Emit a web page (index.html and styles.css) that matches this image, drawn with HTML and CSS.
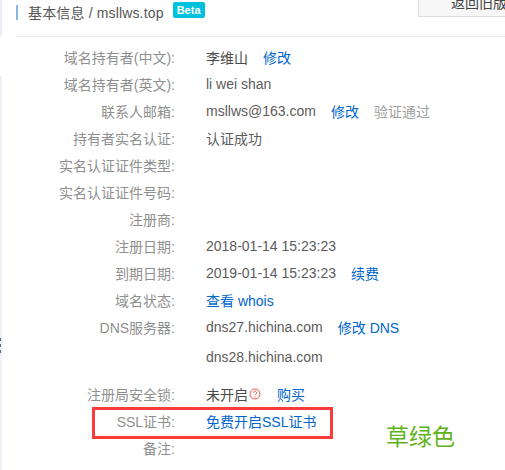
FILE: index.html
```html
<!DOCTYPE html>
<html lang="zh">
<head>
<meta charset="utf-8">
<title>基本信息</title>
<link rel="stylesheet" href="styles.css">
</head>
<body>
<div class="edge"></div>
<div class="grip"><i></i><i></i><i></i></div>
<main class="panel">
  <header class="head">
    <h1 class="title">基本信息 / msllws.top</h1>
    <span class="beta">Beta</span>
    <button class="old">返回旧版本</button>
  </header>
  <div class="rows">
    <div class="row"><span class="k">域名持有者(中文):</span><span class="v dark">李维山</span><a class="l">修改</a></div>
    <div class="row"><span class="k">域名持有者(英文):</span><span class="v">li wei shan</span></div>
    <div class="row"><span class="k">联系人邮箱:</span><span class="v">msllws@163.com</span><a class="l">修改</a><span class="muted">验证通过</span></div>
    <div class="row"><span class="k">持有者实名认证:</span><span class="v">认证成功</span></div>
    <div class="row"><span class="k">实名认证证件类型:</span></div>
    <div class="row"><span class="k">实名认证证件号码:</span></div>
    <div class="row"><span class="k">注册商:</span></div>
    <div class="row"><span class="k">注册日期:</span><span class="v">2018-01-14 15:23:23</span></div>
    <div class="row"><span class="k">到期日期:</span><span class="v">2019-01-14 15:23:23</span><a class="l">续费</a></div>
    <div class="row"><span class="k">域名状态:</span><a class="l first">查看 whois</a></div>
    <div class="row"><span class="k">DNS服务器:</span><span class="v">dns27.hichina.com</span><a class="l">修改 DNS</a></div>
    <div class="row second"><span class="k"></span><span class="v">dns28.hichina.com</span></div>
    <div class="row lock"><span class="k">注册局安全锁:</span><span class="v dark">未开启</span><svg class="q" viewBox="0 0 12 12" width="12" height="12"><circle cx="6" cy="6" r="5" fill="none" stroke="#f5574f" stroke-width="1"/><path d="M4.4 4.8a1.6 1.6 0 1 1 2.4 1.4c-.6.3-.8.6-.8 1.1" fill="none" stroke="#f5574f" stroke-width="1"/><circle cx="6" cy="9" r=".6" fill="#f5574f"/></svg><a class="l buy">购买</a></div>
    <div class="row"><span class="k">SSL证书:</span><a class="l first">免费开启SSL证书</a></div>
    <div class="row"><span class="k">备注:</span></div>
  </div>
</main>
<div class="mark"></div>
<div class="note">草绿色</div>
</body>
</html>
```
FILE: styles.css
```css
* { box-sizing: border-box; }
html, body { margin: 0; padding: 0; }
body {
  width: 505px;
  height: 470px;
  overflow: hidden;
  position: relative;
  background: #fff;
  font-family: "Liberation Sans", "Noto Sans CJK SC", sans-serif;
  font-size: 14px;
  color: #666;
}
.edge {
  position: absolute;
  left: 0;
  top: 0;
  bottom: 0;
  width: 2px;
  background: linear-gradient(#e9edf5 0 36px, #fff 36px 76px, #eef1f7 76px);
}
.grip {
  position: absolute;
  left: 0;
  top: 338px;
  display: flex;
  flex-direction: column;
  gap: 3px;
}
.grip i {
  display: block;
  width: 1px;
  height: 3px;
  background: #4d6b8a;
}
.panel { padding-left: 16px; }
.head {
  display: flex;
  align-items: flex-start;
  height: 37px;
  border-bottom: 1px solid #e8eaec;
  position: relative;
}
.title {
  margin: 5px 0 0;
  height: 15px;
  padding-left: 10px;
  border-left: 2px solid #88b7e0;
  font-size: 14px;
  font-weight: normal;
  line-height: 16px;
  letter-spacing: 0.15px;
  color: #555;
}
.beta {
  margin: 2px 0 0 9px;
  width: 32px;
  height: 16px;
  border-radius: 2px;
  background: #00c1de;
  color: #fff;
  font-size: 11px;
  font-weight: bold;
  line-height: 16px;
  text-align: center;
}
.old {
  position: absolute;
  left: 402px;
  top: -13px;
  width: 110px;
  height: 30px;
  border: 1px solid #ddd;
  background: #f7f7f7;
  color: #444;
  font: 14px "Liberation Sans", "Noto Sans CJK SC", sans-serif;
  padding: 0 0 0 32px;
  text-align: left;
  white-space: nowrap;
  overflow: hidden;
}
.rows { padding-top: 6px; }
.row {
  display: flex;
  align-items: center;
  height: 27px;
  white-space: nowrap;
}
.k {
  width: 159px;
  text-align: right;
  color: #8f8f8f;
}
.v { margin-left: 31px; color: #5c5c5c; }
.dark { color: #4a4a4a; }
.l { margin-left: 15px; color: #06c; }
.first { margin-left: 31px; }
.muted { margin-left: 15px; color: #a0a0a0; }
.second { height: 33px; }
.lock { margin-top: 7px; }
.q { margin-left: 1px; }
.buy { margin-left: 16px; }
.mark {
  position: absolute;
  left: 92px;
  top: 407px;
  width: 241px;
  height: 32px;
  border: 3px solid #fb3a3a;
}
.note {
  position: absolute;
  left: 386px;
  top: 422px;
  font-size: 23px;
  line-height: 30px;
  color: #5fb31a;
}
```
